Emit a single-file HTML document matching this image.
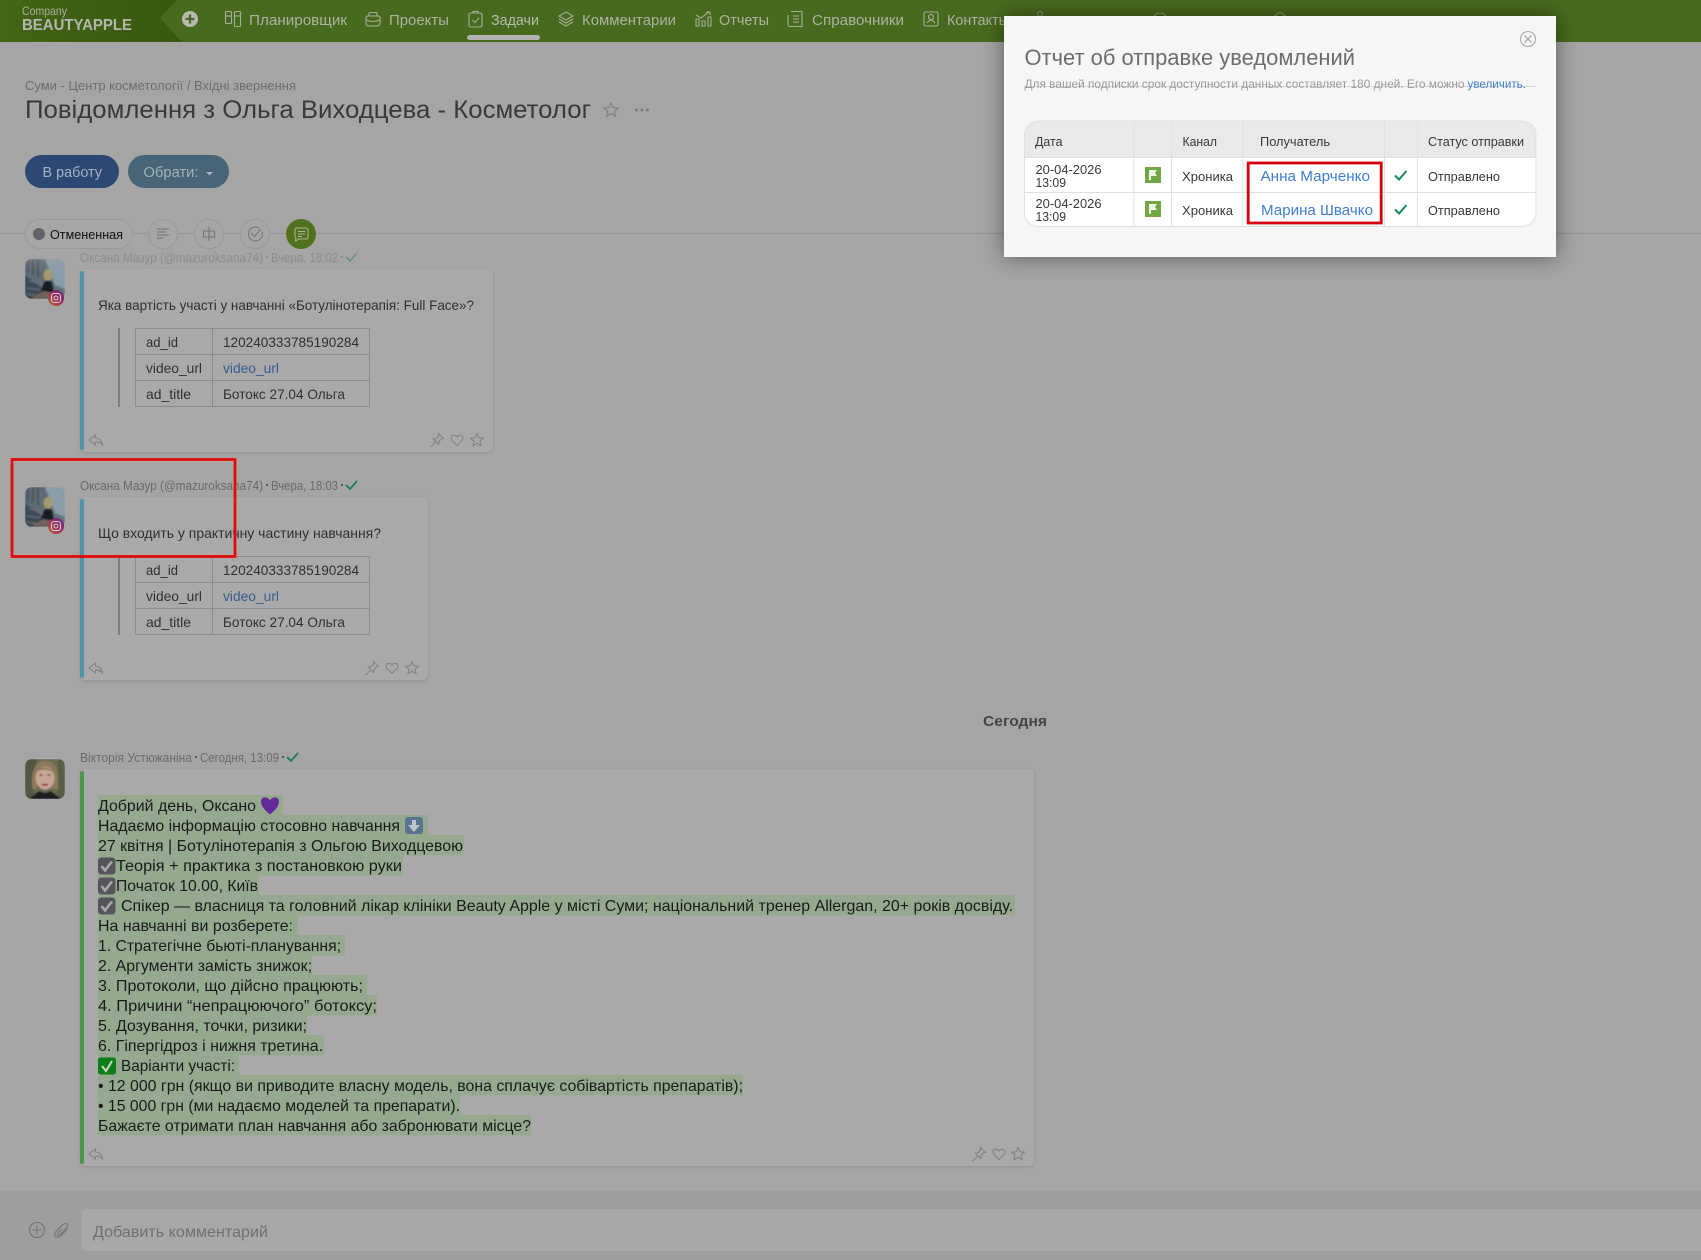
<!DOCTYPE html>
<html><head><meta charset="utf-8"><title>Повідомлення</title>
<style>
html,body{margin:0;padding:0;background:#a5a5a5;width:1701px;height:1260px;overflow:hidden}
svg{display:block;position:absolute;left:0;top:0}
text{font-family:"Liberation Sans","Noto Sans CJK SC",sans-serif;white-space:pre}
.n{font-size:15px;fill:#abb4a2}
.ni{fill:none;stroke:#a5ae9b;stroke-width:1.1}
.h{font-size:12.5px;fill:#6a6a6a}
.b{font-size:14px;fill:#303030}
.m{font-size:16px;fill:#1a1a1a}
.hl{fill:#95a98f}
.tc{font-size:13px;fill:#383838}
.ic{fill:none;stroke:#808080;stroke-width:1}
</style></head><body>
<svg width="1701" height="1260" viewBox="0 0 1701 1260" xmlns="http://www.w3.org/2000/svg">
<defs>
<linearGradient id="lg" x1="0" x2="1" y1="0" y2="0"><stop offset="0" stop-color="#436516"/><stop offset="1" stop-color="#38570f"/></linearGradient>
<linearGradient id="ig" x1="0" x2="1" y1="1" y2="0"><stop offset="0" stop-color="#b0702a"/><stop offset=".5" stop-color="#a02858"/><stop offset="1" stop-color="#562888"/></linearGradient>
<linearGradient id="av" x1="0" x2="1" y1="0" y2="1"><stop offset="0" stop-color="#5a6670"/><stop offset="1" stop-color="#66757f"/></linearGradient>
<linearGradient id="fade" x1="0" x2="0" y1="0" y2="1"><stop offset="0" stop-color="#a5a5a5" stop-opacity=".9"/><stop offset="1" stop-color="#a5a5a5" stop-opacity="0"/></linearGradient>
<filter id="bl" x="-20%" y="-20%" width="140%" height="140%"><feGaussianBlur stdDeviation="11"/></filter>
<filter id="cs" x="-5%" y="-5%" width="110%" height="110%"><feGaussianBlur stdDeviation="1.5"/></filter>
<filter id="soft" x="-10%" y="-10%" width="120%" height="120%"><feGaussianBlur stdDeviation=".7"/></filter>
<clipPath id="ca"><rect width="40" height="40" rx="7"/></clipPath>
<g id="avatar"><g clip-path="url(#ca)"><g filter="url(#soft)"><rect width="40" height="40" fill="url(#av)"/><path d="M20 0H40V30L30 26L24 10Z" fill="#8a9ca8"/><path d="M0 16L18 30V40H0Z" fill="#3c4954"/><path d="M3 0V14M8 0V16M13 0V18" stroke="#48545e" stroke-width="2"/><path d="M4 22L16 24M2 29L17 31M2 35L16 37" stroke="#6a7680" stroke-width="1"/><ellipse cx="23" cy="16" rx="4.500" ry="6" fill="#a8986f"/><path d="M15 34L19 23Q23 20 27 23L30 36Z" fill="#181b20"/><path d="M8 38L18 32L30 34L30 40H8Z" fill="#6e625a"/></g></g>
<circle cx="31" cy="39" r="8" fill="url(#ig)"/><rect x="26.500" y="34.500" width="9" height="9" rx="2.500" fill="none" stroke="#d4d4d4" stroke-width="1.100"/><circle cx="31" cy="39" r="2" fill="none" stroke="#d4d4d4" stroke-width="1"/></g>
<g id="rs"><path class="ic" d="M-7 0L-0.500 -5V-2Q5 -2 6.500 5Q3 1.500 -0.500 2V5Z"/></g>
<g id="pin"><path class="ic" d="M1.500 -6.500L6.500 -1.500L4.500 -1.200L2 1.500L1.800 4.500L-3.800 -1L-1 -1.200L1.500 -3.800ZM-1 2L-6.500 7"/></g>
<g id="heart"><path class="ic" d="M0 5.500L-5 0.500C-8 -3.500 -3 -7 0 -3C3 -7 8 -3.500 5 0.500Z"/></g>
<g id="star"><path class="ic" d="M0 -6.500L1.900 -2.200L6.500 -1.800L3 1.200L4.100 5.800L0 3.300L-4.100 5.800L-3 1.200L-6.500 -1.800L-1.900 -2.200Z"/></g>
<g id="tbl"><rect x="118" y="0" width="2" height="79" fill="#808080"/><rect x="135.500" y=".5" width="234" height="78" fill="none" stroke="#8c8c8c"/><path d="M135.500 26.500H369.500M135.500 52.500H369.500M212.500 0V79" stroke="#8c8c8c" fill="none"/>
<text x="146" y="19" class="b" textLength="32" lengthAdjust="spacingAndGlyphs">ad_id</text><text x="223" y="19" class="b" textLength="136" lengthAdjust="spacingAndGlyphs">120240333785190284</text>
<text x="146" y="45" class="b" textLength="56" lengthAdjust="spacingAndGlyphs">video_url</text><text x="223" y="45" class="b" style="fill:#365d92" textLength="56" lengthAdjust="spacingAndGlyphs">video_url</text>
<text x="146" y="71" class="b" textLength="45" lengthAdjust="spacingAndGlyphs">ad_title</text><text x="223" y="71" class="b" textLength="122" lengthAdjust="spacingAndGlyphs">Ботокс 27.04 Ольга</text></g>
<g id="chk"><path d="M0 4L4 8L11 0" fill="none" stroke="#117c4c" stroke-width="1.700"/></g>
<g id="tick"><rect width="17.500" height="17" rx="3.500" fill="#55555a"/><path d="M3.500 8.500L7 13L14 4" fill="none" stroke="#a8a8a8" stroke-width="2.600"/></g>
</defs>

<rect width="1701" height="1260" fill="#a5a5a5"/>
<rect width="1701" height="42" fill="#486a1e"/>
<path d="M0 0H177L160 18L182 42H0Z" fill="url(#lg)"/>
<text x="22" y="15" font-size="12" fill="#a9afa0" textLength="45" lengthAdjust="spacingAndGlyphs">Company</text>
<text x="22" y="30" font-size="16" font-weight="700" fill="#b4b6ae" textLength="110" lengthAdjust="spacingAndGlyphs">BEAUTYAPPLE</text>
<circle cx="190" cy="19" r="8" fill="#b8bab2"/><path d="M190 14.500V23.500M185.500 19H194.500" stroke="#486a1e" stroke-width="2.200"/>
<!-- nav -->
<g class="ni"><rect x="225.500" y="11.500" width="6" height="12" rx="1"/><path d="M225.500 16H231.500"/><rect x="234.500" y="11.500" width="6" height="15" rx="1"/><path d="M234.500 16H240.500"/></g>
<text x="249" y="25" class="n" textLength="98" lengthAdjust="spacingAndGlyphs">Планировщик</text>
<path class="ni" d="M366 18Q366 16 368 16H378Q380 16 380 18V23Q380 26 377 26H369Q366 26 366 23ZM366 20Q373 23 380 20M369 16V13.500Q369 12.500 370 12.500H376Q377 12.500 377 13.500V16"/>
<text x="389" y="25" class="n" textLength="60" lengthAdjust="spacingAndGlyphs">Проекты</text>
<path class="ni" d="M471 13H480Q482 13 482 15V25Q482 27 480 27H471Q469 27 469 25V15Q469 13 471 13ZM473 13V11.500H478V13M472.500 20L475 22.500L479 18"/>
<text x="491" y="25" class="n" style="fill:#b5bdab" textLength="48" lengthAdjust="spacingAndGlyphs">Задачи</text>
<rect x="467" y="35" width="73" height="5" rx="2.500" fill="#b3b3b3"/>
<path class="ni" d="M566 12L573 16L566 20L559 16ZM559 19L566 23L573 19M559 22L566 26L573 22"/>
<text x="582" y="25" class="n" textLength="94" lengthAdjust="spacingAndGlyphs">Комментарии</text>
<path class="ni" d="M696 19H699V26H696ZM702 21H705V26H702ZM708 17H711V26H708ZM696 15L701 18L709 12M706 12H710V15"/>
<text x="719" y="25" class="n" textLength="50" lengthAdjust="spacingAndGlyphs">Отчеты</text>
<path class="ni" d="M791 11.500H802V26.500H791Q788 26.500 788 24V15M793 16H799M793 19H799M793 22H799"/>
<text x="812" y="25" class="n" textLength="92" lengthAdjust="spacingAndGlyphs">Справочники</text>
<path class="ni" d="M926 12H936Q938 12 938 14V24Q938 26 936 26H926Q924 26 924 24V14Q924 12 926 12ZM931 14.500A2.500 2.500 0 1 0 931.001 14.500ZM927 23Q931 17.500 935 23"/>
<text x="947" y="25" class="n" textLength="62" lengthAdjust="spacingAndGlyphs">Контакты</text>
<g class="ni" opacity=".75"><circle cx="1040" cy="14" r="2.500"/><circle cx="1160" cy="20" r="7"/><path d="M1274 17L1278 13H1282L1286 17"/></g>

<!-- page head -->
<text x="25" y="90" font-size="13" fill="#6d6d6d" textLength="271" lengthAdjust="spacingAndGlyphs">Суми - Центр косметології / Вхідні звернення</text>
<text x="25" y="118" font-size="25" fill="#3a3a3c" textLength="566" lengthAdjust="spacingAndGlyphs">Повідомлення з Ольга Виходцева - Косметолог</text>
<use href="#star" transform="translate(611,110) scale(1.100)"/>
<g fill="#7a7a7a"><circle cx="636.500" cy="110" r="1.500"/><circle cx="642" cy="110" r="1.500"/><circle cx="647.500" cy="110" r="1.500"/></g>
<rect x="25" y="155" width="94" height="33" rx="16.500" fill="#2b4973"/>
<text x="42.500" y="177" font-size="15" fill="#a5b0c0" textLength="59.500" lengthAdjust="spacingAndGlyphs">В работу</text>
<rect x="128" y="155" width="101" height="33" rx="16.500" fill="#486577"/>
<text x="143.500" y="177" font-size="15" fill="#a5b3bc" textLength="55" lengthAdjust="spacingAndGlyphs">Обрати:</text>
<path d="M206 172H213L209.500 175.500Z" fill="#a5b3bc"/>

<!-- msg 1 -->
<g opacity=".6"><text x="80" y="262" class="h" textLength="183" lengthAdjust="spacingAndGlyphs">Оксана Мазур (@mazuroksana74)</text><rect x="266" y="256" width="2" height="2" fill="#666"/><text x="271" y="262" class="h" textLength="67" lengthAdjust="spacingAndGlyphs">Вчера, 18:02</text><rect x="341" y="256" width="2" height="2" fill="#666"/><use href="#chk" transform="translate(346,253)"/></g>
<use href="#avatar" x="25" y="259"/>
<rect x="80" y="270" width="413" height="183" rx="5" fill="#000" opacity=".12" filter="url(#cs)"/>
<rect x="80" y="269" width="413" height="183" rx="5" fill="#a9a9a9"/>
<rect x="80" y="271" width="4" height="179" rx="2" fill="#4f93a8"/>
<rect x="0" y="234" width="1701" height="38" fill="url(#fade)"/>
<text x="98" y="310" class="b" textLength="376" lengthAdjust="spacingAndGlyphs">Яка вартість участі у навчанні «Ботулінотерапія: Full Face»?</text>
<use href="#tbl" y="328"/>
<use href="#rs" x="96" y="440"/><use href="#pin" x="437" y="440"/><use href="#heart" x="457" y="440"/><use href="#star" x="477" y="440"/>

<rect x="0" y="233" width="1701" height="1" fill="#959595"/>
<rect x="25.500" y="219.500" width="107" height="29" rx="14.500" fill="#a6a6a6" stroke="#999"/>
<circle cx="39" cy="234" r="6" fill="#63636b"/>
<text x="50" y="239" font-size="13" fill="#111" textLength="73" lengthAdjust="spacingAndGlyphs">Отмененная</text>
<g fill="#a6a6a6" stroke="#999"><circle cx="163" cy="234" r="14.500"/><circle cx="209" cy="234" r="14.500"/><circle cx="255" cy="234" r="14.500"/></g>
<path d="M157 229H169M157 232H166M157 235H169M157 238H163" stroke="#727272" fill="none"/>
<path d="M209 227V241M203.500 231H214.500V237H203.500Z" stroke="#727272" fill="none"/>
<path d="M262 231.500A7 7 0 1 1 259 228M251 233L254.500 236.500L261 229" stroke="#727272" fill="none"/>
<circle cx="301" cy="234" r="15" fill="#50721c"/>
<path d="M297 228H306Q308 228 308 230V237Q308 239 306 239H299L295.500 241L296 238Q295 237.500 295 236V230Q295 228 297 228ZM298 231.500H305M298 234H305M298 236.500H302" stroke="#a9b79b" fill="none"/>

<!-- msg 2 -->
<text x="80" y="490" class="h" textLength="183" lengthAdjust="spacingAndGlyphs">Оксана Мазур (@mazuroksana74)</text><rect x="266" y="484" width="2" height="2" fill="#555"/><text x="271" y="490" class="h" textLength="67" lengthAdjust="spacingAndGlyphs">Вчера, 18:03</text><rect x="341" y="484" width="2" height="2" fill="#555"/><use href="#chk" transform="translate(346,481)"/>
<use href="#avatar" x="25" y="487"/>
<rect x="80" y="498" width="348" height="183" rx="5" fill="#000" opacity=".12" filter="url(#cs)"/>
<rect x="80" y="497" width="348" height="183" rx="5" fill="#a9a9a9"/>
<rect x="80" y="499" width="4" height="179" rx="2" fill="#4f93a8"/>
<text x="98" y="538" class="b" textLength="283" lengthAdjust="spacingAndGlyphs">Що входить у практичну частину навчання?</text>
<use href="#tbl" y="556"/>
<use href="#rs" x="96" y="668"/><use href="#pin" x="372" y="668"/><use href="#heart" x="392" y="668"/><use href="#star" x="412" y="668"/>
<rect x="12" y="459.500" width="223" height="97" fill="none" stroke="#e20a0a" stroke-width="2.800"/>

<text x="983" y="726" font-size="14.500" font-weight="700" fill="#454545" textLength="64" lengthAdjust="spacingAndGlyphs">Сегодня</text>

<!-- msg 3 -->
<text x="80" y="762" class="h" textLength="112" lengthAdjust="spacingAndGlyphs">Вікторія Устюжаніна</text><rect x="195" y="756" width="2" height="2" fill="#555"/><text x="200" y="762" class="h" textLength="79" lengthAdjust="spacingAndGlyphs">Сегодня, 13:09</text><rect x="282" y="756" width="2" height="2" fill="#555"/><use href="#chk" transform="translate(287,753)"/>
<g transform="translate(25,759)"><g clip-path="url(#ca)"><g filter="url(#soft)"><rect width="40" height="40" fill="#666a55"/><path d="M0 0H12L8 40H0Z" fill="#52563f"/><path d="M33 0H40V40H32Z" fill="#595d45"/><path d="M7 18Q9 2 20 2Q32 2 33 18L33 30H27L28 18H12L12 30H7Z" fill="#8b7a58"/><ellipse cx="20" cy="19" rx="9.500" ry="11.500" fill="#c7a595"/><path d="M11 12Q20 4 29 13Q21 9 11 12Z" fill="#8b7a58"/><path d="M14.500 16H17.500M22.500 16H25.500" stroke="#3e3230" stroke-width="1.200"/><path d="M17 25Q20 27 23 25" stroke="#8d2022" stroke-width="1.800" fill="none"/><path d="M4 40L14 32L20 34L26 32L36 40Z" fill="#1a1a1e"/></g></g></g>
<rect x="80" y="770" width="954" height="397" rx="5" fill="#000" opacity=".12" filter="url(#cs)"/>
<rect x="80" y="769" width="954" height="397" rx="5" fill="#a9a9a9"/>
<rect x="80" y="771" width="4" height="393" rx="2" fill="#4a964c"/>
<g class="hl">
<rect x="98" y="795" width="185" height="20.500"/><rect x="98" y="815" width="330" height="20.500"/><rect x="98" y="835" width="366" height="20.500"/><rect x="98" y="855" width="305" height="20.500"/><rect x="98" y="875" width="161" height="20.500"/><rect x="98" y="895" width="917" height="20.500"/><rect x="98" y="915" width="200" height="20.500"/><rect x="98" y="935" width="247" height="20.500"/><rect x="98" y="955" width="214" height="20.500"/><rect x="98" y="975" width="269" height="20.500"/><rect x="98" y="995" width="279" height="20.500"/><rect x="98" y="1015" width="209" height="20.500"/><rect x="98" y="1035" width="226" height="20.500"/><rect x="98" y="1055" width="141" height="20.500"/><rect x="98" y="1075" width="645" height="20.500"/><rect x="98" y="1095" width="362" height="20.500"/><rect x="98" y="1115" width="433" height="20.500"/>
</g>
<text x="98" y="811" class="m" textLength="158" lengthAdjust="spacingAndGlyphs">Добрий день, Оксано</text>
<path d="M270 814.500C263 809 261 804.500 261 801.500C261 797 267 795.500 270 800.500C273 795.500 279 797 279 801.500C279 804.500 277 809 270 814.500Z" fill="#642a9c"/>
<text x="98" y="831" class="m" textLength="302" lengthAdjust="spacingAndGlyphs">Надаємо інформацію стосовно навчання</text>
<rect x="405" y="817" width="18" height="17" rx="3" fill="#56748e"/><path d="M412 820H416V825H420L414 832L408 825H412Z" fill="#c0c5c8"/>
<text x="98" y="851" class="m" textLength="365" lengthAdjust="spacingAndGlyphs">27 квітня | Ботулінотерапія з Ольгою Виходцевою</text>
<use href="#tick" x="98" y="857.500"/>
<text x="116" y="871" class="m" textLength="286" lengthAdjust="spacingAndGlyphs">Теорія + практика з постановкою руки</text>
<use href="#tick" x="98" y="877.500"/>
<text x="116" y="891" class="m" textLength="142" lengthAdjust="spacingAndGlyphs">Початок 10.00, Київ</text>
<use href="#tick" x="98" y="897.500"/>
<text x="121" y="911" class="m" textLength="892" lengthAdjust="spacingAndGlyphs">Спікер — власниця та головний лікар клініки Beauty Apple у місті Суми; національний тренер Allergan, 20+ років досвіду.</text>
<text x="98" y="931" class="m" textLength="195" lengthAdjust="spacingAndGlyphs">На навчанні ви розберете:</text>
<text x="98" y="951" class="m" textLength="243" lengthAdjust="spacingAndGlyphs">1. Стратегічне бьюті-планування;</text>
<text x="98" y="971" class="m" textLength="214" lengthAdjust="spacingAndGlyphs">2. Аргументи замість знижок;</text>
<text x="98" y="991" class="m" textLength="265" lengthAdjust="spacingAndGlyphs">3. Протоколи, що дійсно працюють;</text>
<text x="98" y="1011" class="m" textLength="279" lengthAdjust="spacingAndGlyphs">4. Причини “непрацюючого” ботоксу;</text>
<text x="98" y="1031" class="m" textLength="209" lengthAdjust="spacingAndGlyphs">5. Дозування, точки, ризики;</text>
<text x="98" y="1051" class="m" textLength="225" lengthAdjust="spacingAndGlyphs">6. Гіпергідроз і нижня третина.</text>
<rect x="98" y="1057.500" width="18" height="17" rx="2.500" fill="#0f7d18"/><path d="M102 1066L106 1071L112 1061" fill="none" stroke="#cfd8cc" stroke-width="2"/>
<text x="121" y="1071" class="m" textLength="114" lengthAdjust="spacingAndGlyphs">Варіанти участі:</text>
<text x="98" y="1091" class="m" textLength="645" lengthAdjust="spacingAndGlyphs">• 12 000 грн (якщо ви приводите власну модель, вона сплачує собівартість препаратів);</text>
<text x="98" y="1111" class="m" textLength="362" lengthAdjust="spacingAndGlyphs">• 15 000 грн (ми надаємо моделей та препарати).</text>
<text x="98" y="1131" class="m" textLength="433" lengthAdjust="spacingAndGlyphs">Бажаєте отримати план навчання або забронювати місце?</text>
<use href="#rs" x="96" y="1154"/><use href="#pin" x="979" y="1154"/><use href="#heart" x="999" y="1154"/><use href="#star" x="1018" y="1154"/>

<!-- bottom -->
<rect x="0" y="1191" width="1701" height="69" fill="#9e9e9e"/>
<rect x="82" y="1209" width="1640" height="42" rx="5" fill="#a8a8a8"/>
<text x="93" y="1237" font-size="16" fill="#707070" textLength="175" lengthAdjust="spacingAndGlyphs">Добавить комментарий</text>
<circle cx="37" cy="1230" r="7.500" fill="none" stroke="#747474" stroke-width="1.100"/><path d="M37 1225.500V1234.500M32.500 1230H41.500" stroke="#747474" stroke-width="1.100"/>
<path d="M62 1229L58 1233Q57 1234.200 58.200 1235Q59 1235.600 60 1234.800L66.500 1228Q69 1225 66.500 1223.800Q64.500 1223 62.500 1225L55.500 1232Q54 1235 55.500 1236.500Q58 1238 60.500 1236L67.500 1229" fill="none" stroke="#747474" stroke-width="1.100"/>

<!-- modal -->
<rect x="1004" y="16" width="552" height="241" fill="#000" opacity=".45" filter="url(#bl)"/>
<rect x="1004" y="16" width="552" height="241" fill="#f6f6f6"/>
<text x="1024.500" y="65" font-size="22" fill="#6c6c6c" textLength="330.500" lengthAdjust="spacingAndGlyphs">Отчет об отправке уведомлений</text>
<rect x="1024" y="86" width="512" height="1" fill="#d4d4d4"/>
<text x="1024.500" y="88" font-size="12" fill="#9a9a9a" textLength="440" lengthAdjust="spacingAndGlyphs">Для вашей подписки срок доступности данных составляет 180 дней. Его можно</text>
<text x="1467.500" y="88" font-size="12" fill="#3f7fd0" textLength="58.500" lengthAdjust="spacingAndGlyphs">увеличить.</text>
<circle cx="1528" cy="39" r="7.500" fill="none" stroke="#aaa" stroke-width="1.100"/><path d="M1524.500 35.500L1531.500 42.500M1531.500 35.500L1524.500 42.500" stroke="#9a9a9a" stroke-width="1.100"/>
<clipPath id="tc"><rect x="1024.500" y="121" width="511.500" height="105.500" rx="14"/></clipPath>
<g clip-path="url(#tc)">
<rect x="1024" y="121" width="513" height="106" fill="#fff"/>
<rect x="1024" y="121" width="513" height="37" fill="#e9e9e9"/>
<path d="M1024 157.500H1537M1024 192.500H1537M1134 121V227M1171.500 121V227M1243 121V227M1384.500 121V227M1417.500 121V227" stroke="#e0e0e0" stroke-width="1" fill="none"/>
</g>
<rect x="1024.500" y="121" width="511.500" height="105.500" rx="14" fill="none" stroke="#e0e0e0"/>
<text x="1035" y="146" class="tc" textLength="27.500" lengthAdjust="spacingAndGlyphs">Дата</text>
<text x="1182.500" y="146" class="tc" textLength="34.500" lengthAdjust="spacingAndGlyphs">Канал</text>
<text x="1260" y="146" class="tc" textLength="70" lengthAdjust="spacingAndGlyphs">Получатель</text>
<text x="1428" y="146" class="tc" textLength="96" lengthAdjust="spacingAndGlyphs">Статус отправки</text>
<text x="1035.500" y="174" class="tc" textLength="66" lengthAdjust="spacingAndGlyphs">20-04-2026</text>
<text x="1035.500" y="187" class="tc" textLength="30.500" lengthAdjust="spacingAndGlyphs">13:09</text>
<text x="1035.500" y="208" class="tc" textLength="66" lengthAdjust="spacingAndGlyphs">20-04-2026</text>
<text x="1035.500" y="221" class="tc" textLength="30.500" lengthAdjust="spacingAndGlyphs">13:09</text>
<rect x="1145" y="167" width="16" height="16" fill="#71a845"/><path d="M1149 180V170H1157L1155 173L1157 176H1151V180Z" fill="#eef4e6"/>
<rect x="1145" y="201" width="16" height="16" fill="#71a845"/><path d="M1149 214V204H1157L1155 207L1157 210H1151V214Z" fill="#eef4e6"/>
<text x="1182" y="181" class="tc" textLength="51" lengthAdjust="spacingAndGlyphs">Хроника</text>
<text x="1182" y="215" class="tc" textLength="51" lengthAdjust="spacingAndGlyphs">Хроника</text>
<text x="1260.500" y="181" font-size="15" fill="#3f7ed0" textLength="109.500" lengthAdjust="spacingAndGlyphs">Анна Марченко</text>
<text x="1261" y="215" font-size="15" fill="#3f7ed0" textLength="112" lengthAdjust="spacingAndGlyphs">Марина Швачко</text>
<rect x="1248.200" y="163" width="133" height="60" fill="none" stroke="#d6000c" stroke-width="2.800"/>
<path d="M1395 175.500L1399 179.500L1406.500 171" fill="none" stroke="#118a55" stroke-width="2"/>
<path d="M1395 209.500L1399 213.500L1406.500 205" fill="none" stroke="#118a55" stroke-width="2"/>
<text x="1428" y="181" class="tc" textLength="72" lengthAdjust="spacingAndGlyphs">Отправлено</text>
<text x="1428" y="215" class="tc" textLength="72" lengthAdjust="spacingAndGlyphs">Отправлено</text>
</svg>
</body></html>
